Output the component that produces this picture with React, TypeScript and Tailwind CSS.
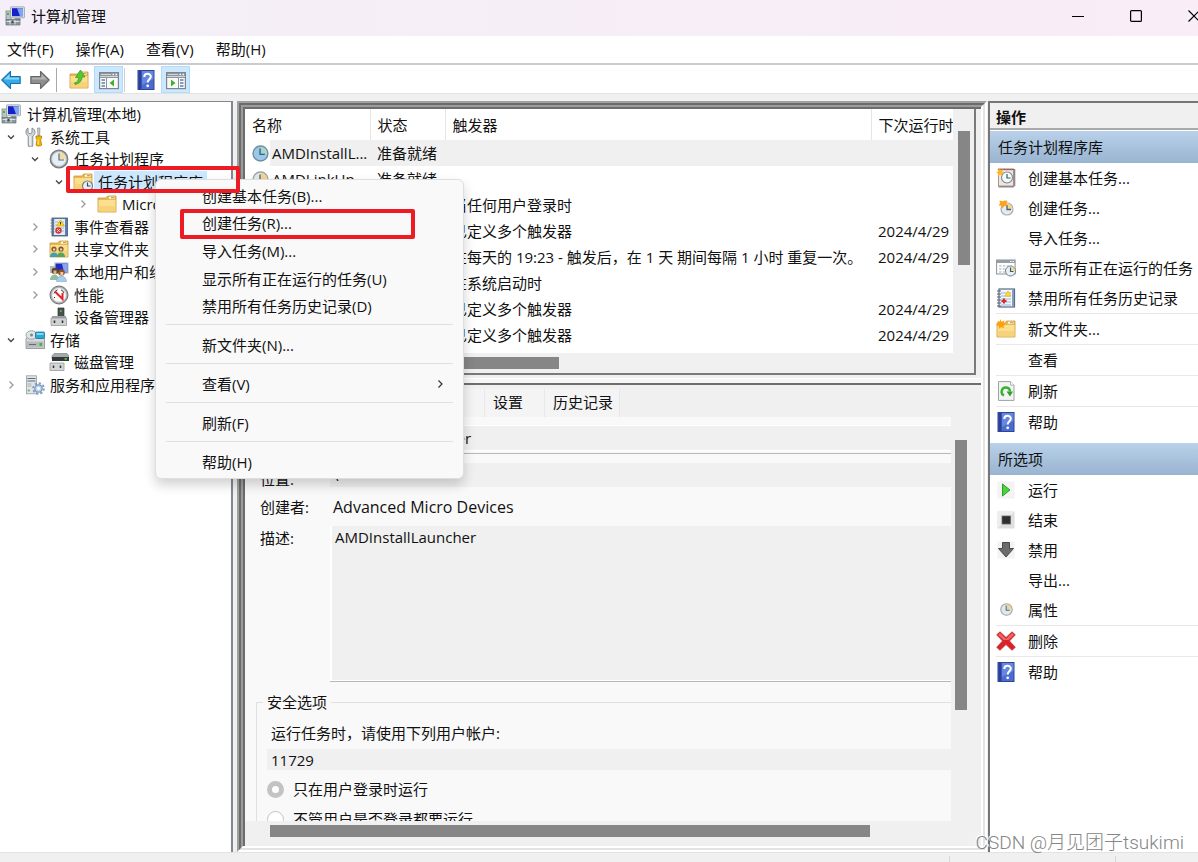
import React from "react";

type IconProps = { className?: string };

function Svg({ children, className = "size-5", box = "0 0 20 20" }: { children: React.ReactNode; className?: string; box?: string }) {
  return (
    <svg viewBox={box} className={"shrink-0 " + className} aria-hidden="true">
      {children}
    </svg>
  );
}

function Computer({ className }: IconProps) {
  return (
    <Svg className={className}>
      <rect x="1" y="5" width="5" height="9" fill="#b9c4c4" stroke="#7f8b8b" strokeWidth=".8" />
      <rect x="2" y="7" width="2" height="2" fill="#4fae4a" />
      <rect x="5.500" y=".8" width="14" height="11" rx=".8" fill="#d9dee2" stroke="#9aa3aa" strokeWidth=".8" />
      <rect x="7" y="2.200" width="11" height="8" fill="#1420c8" />
      <path d="M12 2.200h6v8h-3z" fill="#7fa4f0" />
      <path d="M10 12h5l1 2H9z" fill="#8c969c" />
      <path d="M1 13.500h14v5.500H1z" fill="#8b989b" stroke="#667275" strokeWidth=".7" />
      <path d="M1.500 15.500h13M5 14v4.500M10 14v4.500" stroke="#d8e0e2" strokeWidth="1" />
      <rect x="6.500" y="15" width="2" height="2" fill="#3e4a4e" />
    </Svg>
  );
}

function Tools({ className }: IconProps) {
  return (
    <Svg className={className}>
      <path d="M3 1v4.500l2 1.500 2-1.500V1c2 .8 3 2.500 3 4.300 0 1.700-1 3-2.200 3.700V18a2 2 0 0 1-4.600 0V9C2 8.300 1 7 1 5.300 1 3.500 1.500 1.800 3 1z" fill="#d4d6d8" stroke="#7f8386" strokeWidth=".9" />
      <path d="M5 9v9" stroke="#fff" strokeWidth="1" />
      <path d="M12.500 1h2.500l-.4 8h-1.700z" fill="#c5c9cc" stroke="#85898c" strokeWidth=".6" />
      <path d="M11 9h5.500v2.500l-1 1.200 1.200 5.300c0 1.300-5.700 1.300-5.700 0l1-5.300-1-1.200z" fill="#f7b500" stroke="#b67a00" strokeWidth=".8" />
      <path d="M13.200 12.500v5" stroke="#fff0a0" strokeWidth="1" />
    </Svg>
  );
}

function BigClock({ className }: IconProps) {
  return (
    <Svg className={className}>
      <circle cx="10" cy="10" r="8.800" fill="#a6aaac" stroke="#76797b" strokeWidth="1.200" />
      <circle cx="10" cy="10" r="6.900" fill="#e6eff7" stroke="#dcdedf" strokeWidth="1" />
      <path d="M10 10V3.500a6.500 6.500 0 0 1 6.500 6.500z" fill="#f5dc9c" />
      <path d="M10 4.500V11h5" fill="none" stroke="#5a6a88" strokeWidth="1.200" />
    </Svg>
  );
}

function FolderShape({ star = false }: { star?: boolean }) {
  return (
    <>
      <path d="M1 4h8l1.500-2H19v16H1z" fill="#e7b950" stroke="#c99a3b" strokeWidth=".8" />
      <path d="M1.500 6h17v11.500h-17z" fill="#fadf8f" />
      <path d="M1.500 12h17v5.500h-17z" fill="#f3cd70" opacity=".7" />
      <rect x="12" y="2.700" width="5.500" height="2" fill="#fff" />
      <rect x="14" y="3.200" width="3" height="1" fill="#c08a4a" />
      {star && <path d="M4.500 0l1 2.700L8.500 1.500 7.500 4.300 10 5.500 7.500 6.700 8 9.500 5.300 8 3 10l-.2-3L0 6.200 2.500 4.600 1.300 2l2.600.6z" fill="#ffa00a" />}
    </>
  );
}

function Folder({ className }: IconProps) {
  return <Svg className={className}><FolderShape /></Svg>;
}
function NewFolder({ className }: IconProps) {
  return <Svg className={className}><FolderShape star /></Svg>;
}
function FolderClock({ className }: IconProps) {
  return (
    <Svg className={className}>
      <FolderShape />
      <circle cx="14.500" cy="14" r="5" fill="#e9f1f6" stroke="#76838c" strokeWidth="1.200" />
      <path d="M14.500 10.500V14h3" fill="none" stroke="#3a4a60" strokeWidth="1.200" />
    </Svg>
  );
}
function FolderUp({ className }: IconProps) {
  return (
    <Svg className={className}>
      <FolderShape />
      <path d="M5.500 13c3-.6 4-2.600 4-5.500H6.500L11.500 0l4.500 7h-3c0 4-2.500 6.500-7 7.500z" fill="#54c832" stroke="#2f9a1f" strokeWidth=".7" />
    </Svg>
  );
}
function SharedFolder({ className }: IconProps) {
  return (
    <Svg className={className}>
      <FolderShape />
      <circle cx="5" cy="10" r="2.600" fill="#8c5a2b" />
      <path d="M1 18c0-6 8-6 8 0z" fill="#3f9fb8" />
      <circle cx="12" cy="10" r="2.600" fill="#7b5530" />
      <path d="M8 18c0-6 8-6 8 0z" fill="#52a55a" />
      <path d="M4 10.500h2.200M11 10.500h2.200" stroke="#f4d7b0" strokeWidth="2" />
    </Svg>
  );
}

function EventBook({ className }: IconProps) {
  return (
    <Svg className={className}>
      <rect x="3" y="1" width="15.500" height="18" fill="#5c7fae" stroke="#40597e" strokeWidth=".8" />
      <rect x="5" y="2" width="11" height="16" fill="#e4ebf2" />
      <path d="M6 5h9M6 8h9M6 11h9M6 14h9" stroke="#a9bcd0" strokeWidth="1" />
      <path d="M1.500 3h4M1.500 6h4M1.500 9h4M1.500 12h4M1.500 15h4" stroke="#707b86" strokeWidth="1.100" />
      <path d="M11.500 3l4 6h-8z" fill="#ffd91a" stroke="#c79b00" strokeWidth=".6" />
      <path d="M11.500 5v2.500" stroke="#333" strokeWidth="1" />
      <circle cx="9.500" cy="13.500" r="3.200" fill="#d93636" />
      <path d="M8.300 12.300l2.400 2.400m0-2.400l-2.400 2.400" stroke="#fff" strokeWidth="1" />
    </Svg>
  );
}

function Notebook({ className }: IconProps) {
  return (
    <Svg className={className}>
      <rect x="3" y="1" width="15.500" height="18" fill="#f5f8fb" stroke="#556a8c" strokeWidth="1.200" />
      <path d="M17 1.500v17" stroke="#6f89b4" strokeWidth="1.600" />
      <path d="M5 5h10M5 8h10M5 11h10M5 14h10M5 17h10" stroke="#9db2d0" strokeWidth="1" />
      <path d="M1 3h4M1 6h4M1 9h4M1 12h4M1 15h4M1 18h4" stroke="#5b6570" strokeWidth="1.100" />
      <path d="M12 3l3 5H9z" fill="#ffe02e" stroke="#e0b400" strokeWidth=".6" />
      <path d="M8 10.500v5M5.500 13h5" stroke="#cf2f3a" strokeWidth="2.200" />
    </Svg>
  );
}

function Users({ className }: IconProps) {
  return (
    <Svg className={className}>
      <rect x="6" y="1" width="13" height="10" fill="#1c2fc4" stroke="#b9c0c8" strokeWidth="1.200" />
      <path d="M13 1.700h5.500v8.500H15z" fill="#86a6ee" />
      <rect x="1" y="4" width="5" height="7" fill="#b3bbbf" />
      <circle cx="6" cy="9" r="3.300" fill="#5a4334" />
      <path d="M4.500 8.500h3v3.500h-3z" fill="#e2b58c" />
      <path d="M1 18c0-7 9-7 9 0z" fill="#8fbf9b" />
      <circle cx="12.500" cy="10.500" r="3.300" fill="#8a532b" />
      <path d="M11.300 10h3v3.500h-3z" fill="#efc49c" />
      <path d="M7.500 19.500c0-7 10-7 10 0z" fill="#a9cdf0" stroke="#7fa7cf" strokeWidth=".6" />
    </Svg>
  );
}

function Performance({ className }: IconProps) {
  return (
    <Svg className={className}>
      <circle cx="10" cy="10" r="9" fill="#a8aaab" stroke="#6f7274" strokeWidth="1" />
      <circle cx="10" cy="10" r="7" fill="#fff" stroke="#ddd" strokeWidth=".8" />
      <path d="M5 8.500a5.500 5.500 0 0 1 3.500-3.700M15 8a5.500 5.500 0 0 0-3-3.200M5 12l1 1" stroke="#333" strokeWidth="1" fill="none" />
      <path d="M6 6.500l7.500 7.500V8" fill="none" stroke="#e0242c" strokeWidth="2" />
    </Svg>
  );
}

function Device({ className }: IconProps) {
  return (
    <Svg className={className}>
      <path d="M9 1h6v10H9z" fill="#4a4f52" stroke="#2f3335" strokeWidth=".7" />
      <rect x="11" y="3" width="1.600" height="2" fill="#53c23e" />
      <path d="M3 9h14v2.500H3z" fill="#9aa0a3" />
      <path d="M2 11h15.500v7.500H2z" fill="#cfd2d3" stroke="#999" strokeWidth=".8" />
      <path d="M5.500 13.500v2.500M13.500 13.500v2.500" stroke="#333" strokeWidth="1.600" />
    </Svg>
  );
}

function Storage({ className }: IconProps) {
  return (
    <Svg className={className}>
      <path d="M1 9l2-3h15l1.500 3v9.500H1z" fill="#d7dadb" stroke="#84898c" strokeWidth=".8" />
      <ellipse cx="6.500" cy="5" rx="5.500" ry="4.300" fill="#dfe4e6" stroke="#8d9498" strokeWidth=".8" />
      <circle cx="6.500" cy="5" r="1.500" fill="#7c868b" />
      <rect x="10.500" y="2" width="9" height="6.500" rx="1" fill="#2aa8d8" stroke="#1b6f96" strokeWidth=".8" />
      <path d="M11.500 3h7v2h-7z" fill="#7dd6f2" />
      <path d="M2 11.500h16.500v6H2z" fill="#b5babc" />
      <path d="M4 14.500h7" stroke="#656b6e" strokeWidth="1" />
      <rect x="14.500" y="13" width="2.500" height="3" fill="#43bb3a" />
    </Svg>
  );
}

function Disk({ className }: IconProps) {
  return (
    <Svg className={className}>
      <path d="M3 4l2-2.500h13L20 4v3H3z" fill="#a4a9ab" stroke="#6e7375" strokeWidth=".6" />
      <path d="M3 5h17v4H3z" fill="#34383a" />
      <rect x="15.500" y="6.200" width="2.500" height="1.500" fill="#4fd23c" />
      <path d="M1 11h14v7.500H1z" fill="#d3d5d6" stroke="#999" strokeWidth=".8" />
      <path d="M4.500 13.500v2.500M11.500 13.500v2.500" stroke="#333" strokeWidth="1.500" />
    </Svg>
  );
}

function Services({ className }: IconProps) {
  return (
    <Svg className={className}>
      <rect x="1.500" y=".8" width="10" height="18" fill="#e1e5e7" stroke="#969ca0" strokeWidth=".8" />
      <path d="M2.500 3.500h8M2.500 6h8" stroke="#606a70" strokeWidth="1.200" />
      <path d="M2.500 9h4M2.500 11h4" stroke="#a6adb1" strokeWidth="1" />
      <circle cx="3.800" cy="15.500" r="1.100" fill="#54b648" />
      <circle cx="13.500" cy="13.500" r="5.300" fill="none" stroke="#7d9fc2" strokeWidth="2" strokeDasharray="2.200 1.900" />
      <circle cx="13.500" cy="13.500" r="3.700" fill="#c1d5e8" stroke="#7397bd" strokeWidth="1.200" />
      <circle cx="13.500" cy="13.500" r="1.400" fill="#fff" />
    </Svg>
  );
}

function Arrow({ dir, className }: { dir: "back" | "forward"; className?: string }) {
  return (
    <Svg className={className}>
      {dir === "back" ? (
        <>
          <path d="M.8 10L9.500 1.500v5H19.200v7H9.500v5z" fill="#36a9e6" stroke="#1673ae" strokeWidth="1.100" strokeLinejoin="round" />
          <path d="M2.800 9.500L8.500 4v3.700h9.500v1.800z" fill="#8cd6f8" />
        </>
      ) : (
        <>
          <path d="M19.200 10L10.500 1.500v5H.8v7h9.700v5z" fill="#8f8f8f" stroke="#666" strokeWidth="1.100" strokeLinejoin="round" />
          <path d="M17.200 9.500L11.500 4v3.700H2v1.800z" fill="#b4b4b4" />
        </>
      )}
    </Svg>
  );
}

function PaneIcon({ side, className }: { side: "left" | "right"; className?: string }) {
  return (
    <Svg className={className}>
      <rect x=".6" y="2.600" width="18.800" height="16" fill="#fafafa" stroke="#7e868d" strokeWidth="1.200" />
      <rect x="1" y="3" width="18" height="5" fill="#8d959d" />
      <path d="M2 4.500h10M1 6.500h18" stroke="#d0d6db" strokeWidth="1" />
      <path d="M13.500 4.500h1.500M16.500 4.500h1.500" stroke="#fff" strokeWidth="1.300" />
      {side === "left" ? (
        <>
          <path d="M7.500 8v10" stroke="#8b9299" strokeWidth="1" />
          <path d="M2.500 10h3.500M2.500 13h3.500M2.500 16h3.500" stroke="#5c7fae" strokeWidth="1.400" />
          <path d="M15 9.500v7l-4.500-3.500z" fill="#43b02a" />
        </>
      ) : (
        <>
          <path d="M12.500 8v10" stroke="#8b9299" strokeWidth="1" />
          <path d="M14 10h3.500M14 13h3.500M14 16h3.500" stroke="#5c7fae" strokeWidth="1.400" />
          <path d="M5 9.500v7l4.500-3.500z" fill="#43b02a" />
        </>
      )}
    </Svg>
  );
}

function Help({ className }: IconProps) {
  return (
    <Svg className={className}>
      <rect x="2" y=".5" width="16" height="19" fill="#4a6bd0" stroke="#2e4698" strokeWidth="1" />
      <rect x="2.500" y="1" width="3" height="18" fill="#2c3f96" />
      <path d="M6 1h11.500v8L6 15z" fill="#7a98ea" opacity=".6" />
      <path d="M8.300 7c0-4.300 6.500-4 6.500-.4 0 2.600-3.100 2.800-3.100 6" fill="none" stroke="#fff" strokeWidth="2" />
      <circle cx="11.700" cy="15.800" r="1.400" fill="#fff" />
    </Svg>
  );
}

function SmallClock({ className, tone = "sand" }: { className?: string; tone?: "sand" | "blue" }) {
  return (
    <Svg className={className}>
      <circle cx="10" cy="10" r="8.800" fill={tone === "blue" ? "#9cc8e6" : "#dfe8ea"} stroke={tone === "blue" ? "#6b8ea6" : "#98a5ab"} strokeWidth="1.600" />
      <path d="M10 10V2.200a7.800 7.800 0 0 1 7.800 7.800z" fill={tone === "blue" ? "#a8d8c0" : "#f4d58c"} />
      <path d="M9.500 4v7h5.500" fill="none" stroke={tone === "blue" ? "#2f5f8c" : "#56677c"} strokeWidth="1.600" />
    </Svg>
  );
}

const star = "M5 0l1.200 3L9.500 1.800 8.300 5 11 6.500 8 7.500 8.500 11 5.500 8.800 2.500 11l.3-3.600L0 6.300 3 4.800 1.500 1.800l2.800 1z";

function BasicTask({ className }: IconProps) {
  return (
    <Svg className={className}>
      <path d="M2.500 1h16.800v16.500l-2 2H2.500z" fill="#8f8a88" />
      <rect x="2.500" y="1" width="15" height="17" fill="#e9e8e6" stroke="#a3807a" strokeWidth=".8" />
      <path d="M3 1.500h15" stroke="#a1605a" strokeWidth="1.300" />
      <circle cx="11" cy="9.500" r="5.500" fill="#f5fafa" stroke="#7f898d" strokeWidth="1.100" />
      <path d="M11 6v4h3.500" fill="none" stroke="#3d5d63" strokeWidth="1.200" />
      <path d={star} fill="#ffb52b" transform="scale(.75)" />
    </Svg>
  );
}

function NewTask({ className }: IconProps) {
  return (
    <Svg className={className}>
      <circle cx="11" cy="11" r="6" fill="#e6ecef" stroke="#a4afb5" strokeWidth="1.200" />
      <path d="M11 11V5.500a5.500 5.500 0 0 1 5.500 5.500z" fill="#f4d58c" />
      <path d="M11 7v4.500h4" fill="none" stroke="#4c5e78" strokeWidth="1.300" />
      <path d="M3.500 2.500l3 .8L9 2.500l2.500.2-1 2.800.5 2-3 .8-1.500 2.200-1.500-2.700L2.500 7.500l1.500-2z" fill="#ffa31a" />
    </Svg>
  );
}

function WindowClock({ className }: IconProps) {
  return (
    <Svg className={className}>
      <rect x=".6" y="2" width="18.500" height="14" fill="#fff" stroke="#8b9299" strokeWidth="1" />
      <rect x=".6" y="2" width="18.500" height="3" fill="#949da6" />
      <path d="M14 3.500h1.500M16.500 3.500H18" stroke="#fff" strokeWidth="1" />
      <path d="M3 8h13M3 11h10M3 14h7" stroke="#a7adb3" strokeWidth="1.200" strokeDasharray="2.500 1.300" />
      <circle cx="14.500" cy="13" r="5" fill="#e5f1f7" stroke="#72828d" strokeWidth="1" />
      <path d="M14.500 13V8.500a4.500 4.500 0 0 1 4.500 4.500z" fill="#f4d995" />
      <path d="M14.500 9.500v4h3" fill="none" stroke="#3c5878" strokeWidth="1.100" />
    </Svg>
  );
}

function Refresh({ className }: IconProps) {
  return (
    <Svg className={className}>
      <path d="M2.500.6h12l3.500 3.500v15.300H2.500z" fill="#f3f5f5" stroke="#9aa2a5" strokeWidth="1" />
      <path d="M14.500.6v3.500H18" fill="#fff" stroke="#9aa2a5" strokeWidth=".8" />
      <path d="M8 14.500a4.200 4.200 0 1 1 6-4" fill="none" stroke="#39b234" strokeWidth="2.400" />
      <path d="M10.500 10.500H17L14 15.500z" fill="#2f9f2b" />
    </Svg>
  );
}

function Play({ className }: IconProps) {
  return (
    <Svg className={className}>
      <rect x="1.500" y="1.500" width="17" height="17" fill="#f3f3f3" />
      <path d="M6.500 4l7.500 6-7.500 6z" fill="#4fd03c" stroke="#27a322" strokeWidth="1" strokeLinejoin="round" />
    </Svg>
  );
}
function Stop({ className }: IconProps) {
  return (
    <Svg className={className}>
      <rect x="1.500" y="1.500" width="17" height="17" fill="#dedede" />
      <path d="M1.500 1.500h17l-17 17z" fill="#eeeeee" />
      <rect x="6" y="6" width="8.500" height="8" fill="#2d3032" stroke="#666" strokeWidth=".8" />
    </Svg>
  );
}
function Disable({ className }: IconProps) {
  return (
    <Svg className={className}>
      <rect x="1.500" y="1.500" width="17" height="17" fill="#f3f3f3" />
      <path d="M6.500 2.500h7v6H17.500L10 17 2.500 8.500h4z" fill="#6a6c6e" stroke="#47494a" strokeWidth="1" strokeLinejoin="round" />
    </Svg>
  );
}
function Delete({ className }: IconProps) {
  return (
    <Svg className={className}>
      <path d="M4 .8L10 6.500l6-5.700 3.300 3L13.500 10l5.800 6.300-3.300 3-6-5.800-6 5.800-3.300-3L6.500 10 .7 3.800z" fill="#dc2226" stroke="#b9393b" strokeWidth=".8" strokeLinejoin="round" />
      <path d="M4 2L10 8l6-6 2 1.800-5.500 5.200h-5L2 3.800z" fill="#f4797a" opacity=".8" />
    </Svg>
  );
}

function Chevron({ open }: { open: boolean }) {
  return (
    <svg viewBox="0 0 10 10" className="size-[10px]" fill="none" stroke={open ? "#444" : "#999"} strokeWidth="1.300" aria-hidden="true">
      {open ? <path d="M2 3.500l3 3 3-3" /> : <path d="M3.500 1.500L7 5 3.500 8.500" />}
    </svg>
  );
}

type TreeRow = { level: number; label: string; Icon: React.ComponentType<IconProps>; open?: boolean; selected?: boolean };

const tree: TreeRow[] = [
  { level: 0, label: "计算机管理(本地)", Icon: Computer },
  { level: 1, label: "系统工具", Icon: Tools, open: true },
  { level: 2, label: "任务计划程序", Icon: BigClock, open: true },
  { level: 3, label: "任务计划程序库", Icon: FolderClock, open: true, selected: true },
  { level: 4, label: "Microsoft", Icon: Folder, open: false },
  { level: 2, label: "事件查看器", Icon: EventBook, open: false },
  { level: 2, label: "共享文件夹", Icon: SharedFolder, open: false },
  { level: 2, label: "本地用户和组", Icon: Users, open: false },
  { level: 2, label: "性能", Icon: Performance, open: false },
  { level: 2, label: "设备管理器", Icon: Device },
  { level: 1, label: "存储", Icon: Storage, open: true },
  { level: 2, label: "磁盘管理", Icon: Disk },
  { level: 1, label: "服务和应用程序", Icon: Services, open: false },
];

const indent = ["pl-0", "pl-0", "pl-6", "pl-12", "pl-[72px]"];

function Tree() {
  return (
    <nav aria-label="控制台树" className="overflow-hidden border-t border-r-2 border-[#828790] bg-white pt-px">
      <ul className="grid h-[293px] auto-rows-fr">
        {tree.map(({ level, label, Icon, open, selected }) => (
          <li key={label} className={"flex items-center whitespace-nowrap " + indent[level]}>
            {level > 0 && (
              <span className="flex w-6 shrink-0 justify-center pr-[2px]">{open !== undefined && <Chevron open={open} />}</span>
            )}
            <span className="flex w-[22px] shrink-0 justify-center">
              <Icon className="size-5" />
            </span>
            <span className={"px-1 leading-[22px] " + (level === 0 ? "ml-px " : "") + (selected ? "bg-[#cce8ff]" : "")}>{label}</span>
          </li>
        ))}
      </ul>
    </nav>
  );
}

const tasks = [
  { name: "AMDInstallL...", state: "准备就绪", trigger: "", next: "" },
  { name: "AMDLinkUp...", state: "准备就绪", trigger: "", next: "" },
  { name: "", state: "", trigger: "当任何用户登录时", next: "" },
  { name: "", state: "", trigger: "已定义多个触发器", next: "2024/4/29" },
  { name: "", state: "", trigger: "在每天的 19:23 - 触发后，在 1 天 期间每隔 1 小时 重复一次。", next: "2024/4/29" },
  { name: "", state: "", trigger: "在系统启动时", next: "" },
  { name: "", state: "", trigger: "已定义多个触发器", next: "2024/4/29" },
  { name: "", state: "", trigger: "已定义多个触发器", next: "2024/4/29" },
];

function TaskList() {
  return (
    <section className="mr-[5px] border-r-2 border-b-2 border-[#7a7a7a] bg-[#f0f0f0]">
      <div className="flex">
        <div className="min-w-0 flex-1 overflow-hidden bg-white pb-[5px]">
          <table className="w-full table-fixed whitespace-nowrap">
            <thead>
              <tr className="h-[31px] text-left">
                <th className="w-[125px] border-r border-[#e5e5e5] pl-[7px] font-normal">名称</th>
                <th className="w-[75px] border-r border-[#e5e5e5] pl-[7px] font-normal">状态</th>
                <th className="border-r border-[#e5e5e5] pl-[7px] font-normal">触发器</th>
                <th className="w-[82px] pl-[7px] font-normal">下次运行时</th>
              </tr>
            </thead>
            <tbody>
              {tasks.map((t, i) => (
                <tr key={i} className="h-[26px]">
                  <td>
                    <span className="flex h-[26px] items-center pl-[7px]">
                      {t.name && <SmallClock className="size-[17px]" tone={i === 0 ? "blue" : "sand"} />}
                      <span className={"ml-px flex-1 pl-[2px] leading-[26px] " + (i === 0 ? "bg-[#f0f0f0]" : "")}>{t.name}</span>
                    </span>
                  </td>
                  <td className={"pl-[7px] " + (i === 0 ? "bg-[#f0f0f0]" : "")}>{t.state}</td>
                  <td className={"pl-[7px] " + (i === 0 ? "bg-[#f0f0f0]" : "")}>{t.trigger}</td>
                  <td className={"pl-[7px] " + (i === 0 ? "bg-[#f0f0f0]" : "")}>{t.next}</td>
                </tr>
              ))}
            </tbody>
          </table>
        </div>
        <div className="w-[21px] pt-[22px] pl-[5px]">
          <div className="h-[134px] w-3 bg-[#868686]" />
        </div>
      </div>
      <div className="h-5 pt-1 pl-[17px]">
        <div className="h-3 w-[297px] bg-[#868686]" />
      </div>
    </section>
  );
}

const tabs = ["常规", "触发器", "操作", "条件", "设置", "历史记录"];

function Details() {
  return (
    <section className="flex min-h-0 flex-1 flex-col border-t-2 border-[#6e6e6e] bg-[#f0f0f0] pb-[5px]">
      <div role="tablist" className="flex pt-1">
        {tabs.map((t) => (
          <button
            key={t}
            type="button"
            role="tab"
            aria-selected={t === "常规"}
            className={"h-[28px] border-r border-[#e8e8e8] bg-[#f4f4f4] pb-[2px] pl-2 text-left " + (t === "历史记录" ? "w-[75px]" : "w-[60px]")}
          >
            {t}
          </button>
        ))}
      </div>
      <div className="mr-2 flex min-h-0 flex-1 bg-[#f9f9f9]">
        <form className="min-w-0 flex-1 overflow-hidden pt-2 pl-[11px]">
          <div className="flex items-center border-b border-transparent">
            <label htmlFor="name" className="w-[74px] pl-[4px]">名称:</label>
            <div className="flex-1 border-b border-[#b8b8b8] pb-[2px]">
              <input id="name" readOnly defaultValue="AMDInstallLauncher" className="block h-[26px] w-full border-y border-white bg-[#f0f0f0] outline-none" />
            </div>
          </div>
          <div className="mt-[5px] flex items-center">
            <label htmlFor="location" className="w-[74px] pt-2 pl-[4px]">位置:</label>
            <input id="location" readOnly defaultValue="\" className="h-6 min-w-0 flex-1 bg-[#f0f0f0] px-[3px] outline-none" />
          </div>
          <dl className="mt-[5px] flex h-6 items-center">
            <dt className="w-[77px] pl-[4px]">创建者:</dt>
            <dd className="text-base leading-[22px]">Advanced Micro Devices</dd>
          </dl>
          <div className="mt-[7px] flex items-start">
            <label htmlFor="description" className="w-[74px] pt-px pl-[4px]">描述:</label>
            <div className="flex-1 border-b border-[#b8b8b8]">
              <textarea id="description" readOnly defaultValue="AMDInstallLauncher" className="block h-[155px] w-full resize-none border-b border-l-2 border-white bg-[#f0f0f0] px-[3px] leading-[22px] outline-none" />
            </div>
          </div>
          <fieldset className="mt-2 -mr-px border border-[#e0e0e0] pl-[10px]">
            <legend className="-ml-1 px-1 leading-6">安全选项</legend>
            <label htmlFor="account" className="mt-2 block pl-1 leading-[22px]">运行任务时，请使用下列用户帐户:</label>
            <input id="account" readOnly defaultValue="11729" className="mt-[5px] block h-[21px] w-full bg-[#f0f0f0] px-1 outline-none" />
            <label className="mt-2 flex h-[22px] items-center gap-[9px]">
              <input type="radio" name="logon" defaultChecked className="size-[17px] appearance-none rounded-full border-[5px] border-[#c3c3c3] bg-white" />
              只在用户登录时运行
            </label>
            <label className="mt-2 flex h-[22px] items-center gap-[9px]">
              <input type="radio" name="logon" className="size-[17px] appearance-none rounded-full border border-[#c3c3c3] bg-white" />
              不管用户是否登录都要运行
            </label>
          </fieldset>
        </form>
        <div className="w-[22px] shrink-0 bg-[#f0f0f0] pt-[23px] pl-1">
          <div className="h-[270px] w-3 bg-[#868686]" />
        </div>
      </div>
      <div className="h-5 pt-1 pl-[25px]">
        <div className="h-3 w-[600px] bg-[#868686]" />
      </div>
    </section>
  );
}

type Action = { label: string; Icon?: React.ComponentType<IconProps>; line?: boolean };

const libraryActions: Action[] = [
  { label: "创建基本任务...", Icon: BasicTask },
  { label: "创建任务...", Icon: NewTask },
  { label: "导入任务..." },
  { label: "显示所有正在运行的任务", Icon: WindowClock },
  { label: "禁用所有任务历史记录", Icon: Notebook },
  { label: "新文件夹...", Icon: NewFolder, line: true },
  { label: "查看", line: true },
  { label: "刷新", Icon: Refresh, line: true },
  { label: "帮助", Icon: Help, line: true },
];

function Properties() {
  return <SmallClock className="size-[13px]" />;
}

const itemActions: Action[] = [
  { label: "运行", Icon: Play },
  { label: "结束", Icon: Stop },
  { label: "禁用", Icon: Disable },
  { label: "导出..." },
  { label: "属性", Icon: Properties },
  { label: "删除", Icon: Delete, line: true },
  { label: "帮助", Icon: Help, line: true },
];

function ActionGroup({ title, actions }: { title: string; actions: Action[] }) {
  return (
    <section className="mb-[6px]">
      <h3 className="flex h-8 items-center bg-gradient-to-b from-[#b9d1ea] to-[#99b4d1] pl-2">{title}</h3>
      <ul className="pl-[6px]">
        {actions.map(({ label, Icon, line }) => (
          <li key={label} className={line ? "border-t border-[#e8e8e8]" : ""}>
            <button type="button" className="flex h-[30px] w-full items-center pb-px text-left whitespace-nowrap">
              <span className="mr-3 flex w-5 shrink-0 justify-center">{Icon && <Icon className="size-5" />}</span>
              {label}
            </button>
          </li>
        ))}
      </ul>
    </section>
  );
}

const menuGroup = ["创建基本任务(B)...", "创建任务(R)...", "导入任务(M)...", "显示所有正在运行的任务(U)", "禁用所有任务历史记录(D)"];
const menuSingles = ["新文件夹(N)...", "查看(V)", "刷新(F)", "帮助(H)"];

function ContextMenu() {
  return (
    <div role="menu" className="absolute top-[179px] left-[155px] w-[309px] rounded-md border border-[#dedede] bg-[#f9f9f9] pt-[3px] pb-px shadow-[0_6px_12px_rgba(0,0,0,0.18)]">
      <div className="grid h-[138px] auto-rows-fr">
        {menuGroup.map((m) => (
          <button key={m} type="button" role="menuitem" className="pb-[2px] pl-[46px] text-left">{m}</button>
        ))}
      </div>
      {menuSingles.map((m) => (
        <div key={m}>
          <hr className="mx-[10px] mt-[3px] mb-[6px] border-[#e0e0e0]" />
          <button type="button" role="menuitem" className="flex h-[29px] w-full items-center justify-between pr-[18px] pb-[2px] pl-[46px] text-left">
            {m}
            {m === "查看(V)" && (
              <svg viewBox="0 0 10 10" className="size-[10px]" fill="none" stroke="#333" strokeWidth="1.200" aria-hidden="true">
                <path d="M3.500 1.500L7 5 3.500 8.500" />
              </svg>
            )}
          </button>
        </div>
      ))}
    </div>
  );
}

export default function App() {
  return (
    <div className="relative flex h-screen flex-col overflow-hidden bg-[#f0f0f0] font-['Open_Sans','Noto_Sans_CJK_SC',sans-serif] text-[15px] leading-[22px] text-[#111]">
      <header className="flex h-9 shrink-0 items-center bg-gradient-to-r from-[#f4eff8] to-[#f9edf7] pb-1 pl-[5px]">
        <Computer className="size-5" />
        <h1 className="ml-[6px] flex-1 text-[15px]">计算机管理</h1>
        <div className="-mr-[2px] flex items-center gap-[46px]">
          <button type="button" aria-label="最小化" className="size-3">
            <Svg className="size-3" box="0 0 12 12"><path d="M0 6.500h12" stroke="#000" strokeWidth="1" /></Svg>
          </button>
          <button type="button" aria-label="最大化" className="size-3">
            <Svg className="size-3" box="0 0 12 12"><rect x=".6" y=".6" width="10.800" height="10.800" rx="1" fill="none" stroke="#000" strokeWidth="1.200" /></Svg>
          </button>
          <button type="button" aria-label="关闭" className="size-3">
            <Svg className="size-3" box="0 0 12 12"><path d="M.5.5l11 11m0-11l-11 11" stroke="#000" strokeWidth="1.200" /></Svg>
          </button>
        </div>
      </header>

      <div className="flex h-[29px] shrink-0 items-center gap-[22px] border-b-2 border-[#c9cbd1] bg-white pb-px pl-[7px]">
        {["文件(F)", "操作(A)", "查看(V)", "帮助(H)"].map((m) => (
          <button key={m} type="button">{m}</button>
        ))}
      </div>

      <div role="toolbar" aria-label="工具栏" className="flex h-[29px] shrink-0 items-center border-b border-[#e3e3e3] bg-white pt-px pl-px">
        <button type="button" aria-label="后退"><Arrow dir="back" className="size-5" /></button>
        <button type="button" aria-label="前进" className="ml-[9px]"><Arrow dir="forward" className="size-5" /></button>
        <span className="ml-[6px] h-6 w-px bg-[#a8a8a8]" />
        <button type="button" aria-label="上移一级" className="ml-3"><FolderUp className="size-5" /></button>
        <button type="button" aria-label="显示/隐藏控制台树" className="ml-[5px] flex h-[27px] w-[29px] items-center justify-center border border-[#b3dcfb] bg-[#cce8ff]"><PaneIcon side="left" className="size-5" /></button>
        <span className="ml-px h-6 w-px bg-[#cfcfcf]" />
        <button type="button" aria-label="帮助" className="ml-[11px]"><Help className="size-5" /></button>
        <button type="button" aria-label="显示/隐藏操作窗格" className="ml-[5px] flex h-[27px] w-[29px] items-center justify-center border border-[#b3dcfb] bg-[#cce8ff]"><PaneIcon side="right" className="size-5" /></button>
      </div>

      <main className="grid min-h-0 flex-1 grid-cols-[233px_minmax(0,1fr)_211px] pt-[7px]">
        <Tree />
        <div className="ml-1 min-h-0 border-2 border-t-[#a0a0a0] border-r-white border-b-white border-l-[#a0a0a0]">
          <div className="h-full border-2 border-t-[#6c6c6c] border-r-[#e3e3e3] border-b-[#e3e3e3] border-l-[#6c6c6c]">
            <div className="h-full border-2 border-t-[#9c9c9c] border-r-white border-b-white border-l-[#9c9c9c]">
              <div className="flex h-full flex-col border-t-2 border-l-2 border-[#6c6c6c]">
                <TaskList />
                <div className="mt-[3px] h-[5px] border-t border-white bg-[#f6f6f6]" />
                <Details />
              </div>
            </div>
          </div>
        </div>
        <aside className="ml-px overflow-hidden border-t-2 border-l-2 border-[#767676] bg-white">
          <h2 className="mb-px h-[27px] border-b-2 border-[#a9a9a9] bg-[#f0f0f0] pl-[6px] leading-[28px] font-bold">操作</h2>
          <ActionGroup title="任务计划程序库" actions={libraryActions} />
          <ActionGroup title="所选项" actions={itemActions} />
        </aside>
      </main>

      <footer className="flex h-[10px] shrink-0 justify-end border-t border-[#e3e3e3] pt-[3px]">
        <span className="w-[166px] border-l border-[#d7d7d7]" />
        <span className="w-[83px] border-l border-[#d7d7d7]" />
      </footer>

      <ContextMenu />
      <div className="pointer-events-none absolute top-[166px] left-[66px] h-[27px] w-[174px] rounded-[2px] border-4 border-[#ed1c24]" />
      <div className="pointer-events-none absolute top-[209px] left-[180px] h-[30px] w-[235px] rounded-[2px] border-4 border-[#ed1c24]" />
      <p className="pointer-events-none absolute right-[14px] bottom-[6px] font-['Roboto','Noto_Sans_CJK_SC',sans-serif] text-[19px] leading-[26px] font-light text-[#858585] [text-shadow:-1px_-1px_0_#ffffff]">CSDN @月见团子tsukimi</p>
    </div>
  );
}
